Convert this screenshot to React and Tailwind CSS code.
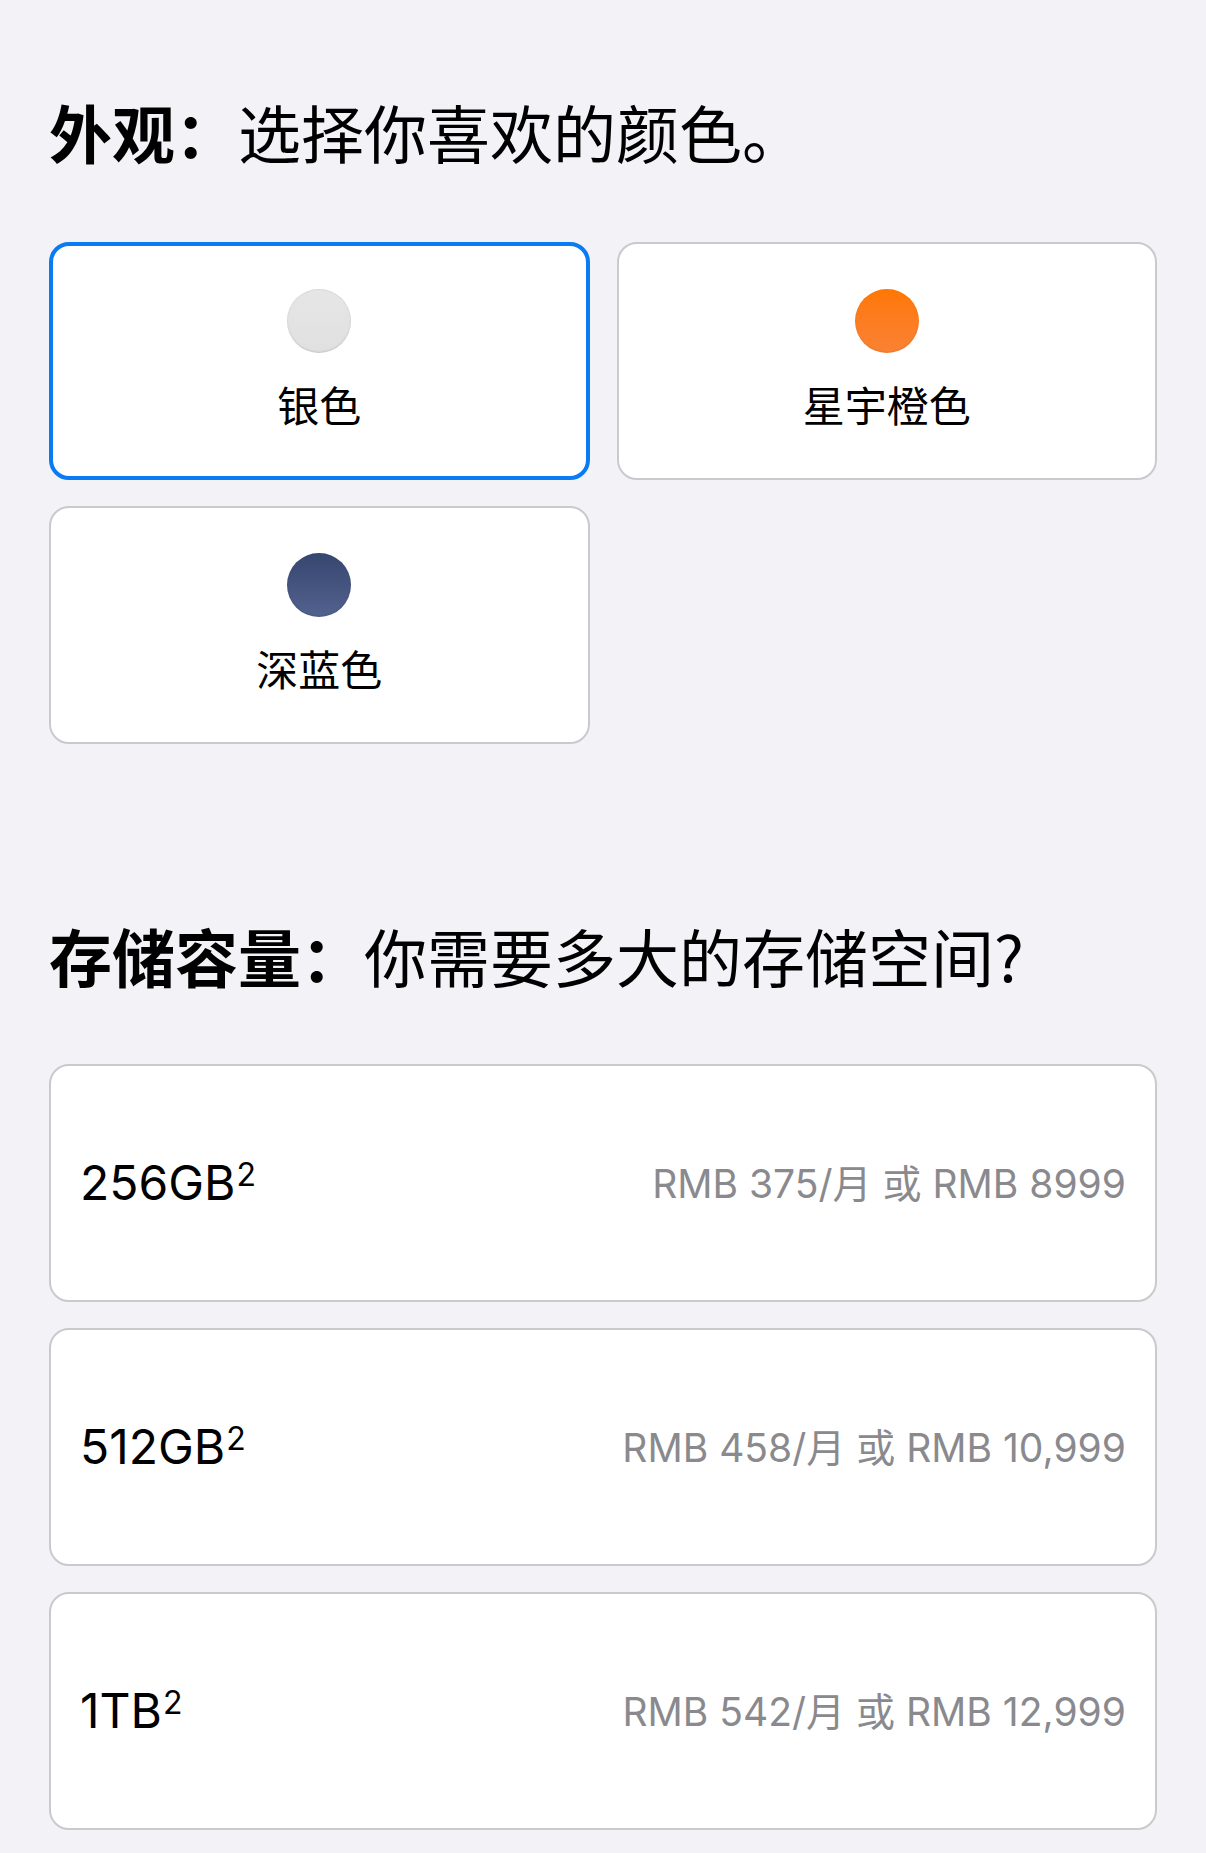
const colors = [
  { name: "银色", swatch: "bg-gradient-to-b from-[#e6e6e6] to-[#e0e0e0] shadow-[inset_0_-1px_2px_rgba(0,0,0,0.12),inset_0_1px_1px_rgba(0,0,0,0.06)]" },
  { name: "星宇橙色", swatch: "bg-gradient-to-b from-[#ff7700] to-[#fa8232] shadow-[inset_0_-1px_2px_rgba(0,0,0,0.08)]" },
  { name: "深蓝色", swatch: "bg-gradient-to-b from-[#35466f] to-[#53628f] shadow-[inset_0_-1px_2px_rgba(0,0,0,0.1)]" },
];

const storage = [
  { size: "256GB", price: "RMB 375/月 或 RMB 8999" },
  { size: "512GB", price: "RMB 458/月 或 RMB 10,999" },
  { size: "1TB", price: "RMB 542/月 或 RMB 12,999" },
];

const cjk = "font-['Noto_Sans_CJK_SC',sans-serif]";
const latin = "font-['Inter','Noto_Sans_CJK_SC',sans-serif]";

export default function App() {
  const selected = 0;

  return (
    <div className={`min-h-[1853px] w-[1206px] bg-[#f2f2f7] px-[49px] pt-[94px] pb-[23px] text-black ${cjk}`}>
      {/* Appearance */}
      <h2 className="text-[63px] leading-[74px]">
        <span className="font-bold">外观：</span>
        <span>选择你喜欢的颜色。</span>
      </h2>

      <div className="mt-[74px] grid w-[1108px] grid-cols-2 gap-x-[27px] gap-y-[26px]">
        {colors.map((c, i) => (
          <div
            key={c.name}
            className={`flex h-[238px] flex-col items-center rounded-[20px] bg-white ${
              i === selected
                ? "border-4 border-[#0a7bf2] pt-[43px]"
                : "border-2 border-[#cacace] pt-[45px]"
            }`}
          >
            <div className={`h-[64px] w-[64px] rounded-full ${c.swatch}`} />
            <div className="mt-[26px] text-[42px] leading-[50px]">{c.name}</div>
          </div>
        ))}
      </div>

      {/* Storage */}
      <h2 className="mt-[174px] text-[63px] leading-[74px]">
        <span className="font-bold">存储容量：</span>
        <span>你需要多大的存储空间?</span>
      </h2>

      <div className="mt-[72px] flex w-[1108px] flex-col gap-[26px]">
        {storage.map((s) => (
          <div
            key={s.size}
            className="flex h-[238px] items-center justify-between rounded-[20px] border-2 border-[#cacace] bg-white pl-[29px] pr-[29px]"
          >
            <div className={`${latin} text-[48px] leading-none`}>
              {s.size}
              <sup className="-top-[14px] ml-[1px] text-[32px]">2</sup>
            </div>
            <div className={`${latin} text-[39px] leading-none text-[#8a8a8e]`}>{s.price}</div>
          </div>
        ))}
      </div>
    </div>
  );
}
